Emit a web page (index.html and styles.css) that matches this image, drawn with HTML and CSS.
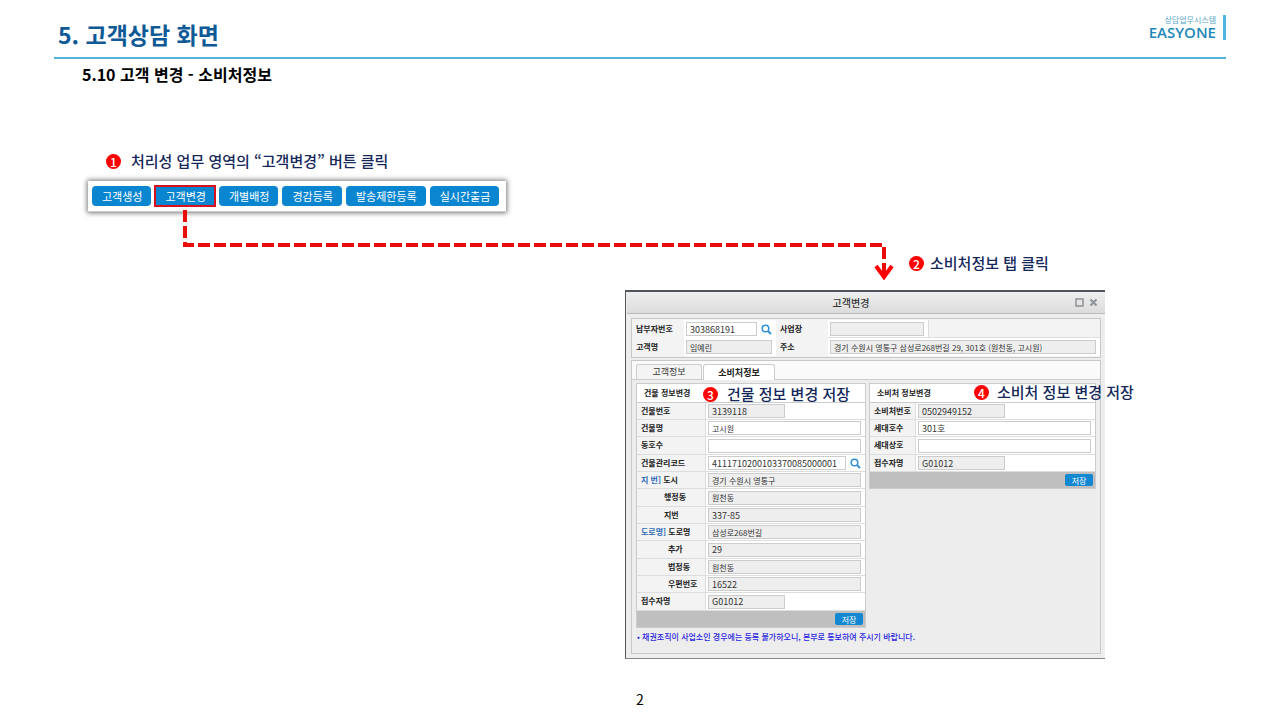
FILE: index.html
```html
<!DOCTYPE html>
<html lang="ko">
<head>
<meta charset="utf-8">
<meta name="viewport" content="width=device-width, initial-scale=1">
<title>고객 변경 - 소비처정보</title>
<link rel="stylesheet" href="styles.css">
</head>
<body>
<div class="slide">
  <header class="slide-head">
    <h1>5. 고객상담 화면</h1>
    <div class="brand"><span class="brand-sub">상담업무시스템</span><span class="brand-name">EASYONE</span></div>
  </header>
  <main class="stage">
    <h2>5.10 고객 변경 - 소비처정보</h2>

    <p class="step"><span class="badge">1</span>처리성 업무 영역의 “고객변경” 버튼 클릭</p>
    <div class="toolbar">
      <button type="button">고객생성</button>
      <button type="button" class="marked">고객변경</button>
      <button type="button">개별배정</button>
      <button type="button">경감등록</button>
      <button type="button">발송제한등록</button>
      <button type="button">실시간출금</button>
    </div>

    <svg class="arrow" width="720" height="80" viewBox="0 0 720 80" fill="none" stroke="#ea0b0b" stroke-width="4" aria-hidden="true">
      <path d="M11 10V45H710V76" stroke-dasharray="12 4"/>
      <path d="M702 66L710 77L718 66" stroke="#f00" stroke-linejoin="miter"/>
    </svg>

    <p class="step step-two"><span class="badge">2</span>소비처정보 탭 클릭</p>

    <section class="popup">
      <div class="popup-title">
        <h3>고객변경</h3>
        <button type="button" class="win-btn" aria-label="최대화"><svg width="9" height="9" viewBox="0 0 9 9" fill="none" stroke="#8d9398" stroke-width="1.5"><rect x="1" y="1" width="7" height="7"/></svg></button>
        <button type="button" class="win-btn" aria-label="닫기"><svg width="9" height="9" viewBox="0 0 9 9" fill="none" stroke="#8d9398" stroke-width="2"><path d="M1.500 1.500L7.500 7.500M7.500 1.500L1.500 7.500"/></svg></button>
      </div>

      <div class="summary">
        <label for="payer">납부자번호</label>
        <div class="cell find"><input id="payer" class="num" value="303868191"><button type="button" class="search" aria-label="납부자번호 검색"><svg width="11" height="11" viewBox="0 0 11 11" fill="none" stroke="#3190d6"><circle cx="4.500" cy="4.500" r="3.300" stroke-width="1.500"/><path d="M7 7L10 10" stroke-width="2"/></svg></button></div>
        <label for="site">사업장</label>
        <div class="site"><div class="cell"><input id="site" readonly></div></div>
        <label for="cust">고객명</label>
        <div class="cell"><input id="cust" value="임예린" readonly></div>
        <label for="addr">주소</label>
        <div class="cell"><input id="addr" value="경기 수원시 영통구 삼성로268번길 29, 301호 (원천동, 고시원)" readonly></div>
      </div>

      <div class="tabbox">
        <div class="tabs" role="tablist">
          <button type="button" role="tab" aria-selected="false">고객정보</button>
          <button type="button" role="tab" aria-selected="true">소비처정보</button>
        </div>
        <div class="panels">
          <form class="panel building">
            <h4>건물 정보변경</h4>
            <div class="row"><label for="b1">건물번호</label><div class="cell"><input id="b1" class="num short" value="3139118" readonly></div></div>
            <div class="row"><label for="b2">건물명</label><div class="cell"><input id="b2" value="고시원"></div></div>
            <div class="row"><label for="b3">동호수</label><div class="cell"><input id="b3"></div></div>
            <div class="row"><label for="b4">건물관리코드</label><div class="cell find"><input id="b4" class="num" value="4111710200103370085000001"><button type="button" class="search" aria-label="건물관리코드 검색"><svg width="11" height="11" viewBox="0 0 11 11" fill="none" stroke="#3190d6"><circle cx="4.500" cy="4.500" r="3.300" stroke-width="1.500"/><path d="M7 7L10 10" stroke-width="2"/></svg></button></div></div>
            <div class="row"><label for="b5"><span class="group">지 번]</span> 도시</label><div class="cell"><input id="b5" value="경기 수원시 영통구" readonly></div></div>
            <div class="row sub"><label for="b6">행정동</label><div class="cell"><input id="b6" value="원천동" readonly></div></div>
            <div class="row sub"><label for="b7">지번</label><div class="cell"><input id="b7" class="num" value="337-85" readonly></div></div>
            <div class="row"><label for="b8"><span class="group">도로명]</span> 도로명</label><div class="cell"><input id="b8" value="삼성로268번길" readonly></div></div>
            <div class="row sub deep"><label for="b9">추가</label><div class="cell"><input id="b9" class="num" value="29" readonly></div></div>
            <div class="row sub deep"><label for="b10">법정동</label><div class="cell"><input id="b10" value="원천동" readonly></div></div>
            <div class="row sub deep"><label for="b11">우편번호</label><div class="cell"><input id="b11" class="num" value="16522" readonly></div></div>
            <div class="row"><label for="b12">접수자명</label><div class="cell"><input id="b12" class="num short" value="G01012" readonly></div></div>
            <div class="actions"><button type="button">저장</button></div>
            <p class="step callout"><span class="badge">3</span>건물 정보 변경 저장</p>
          </form>
          <form class="panel consumer">
            <h4>소비처 정보변경</h4>
            <div class="row"><label for="c1">소비처번호</label><div class="cell"><input id="c1" class="num short" value="0502949152" readonly></div></div>
            <div class="row"><label for="c2">세대호수</label><div class="cell"><input id="c2" class="num" value="301호"></div></div>
            <div class="row"><label for="c3">세대상호</label><div class="cell"><input id="c3"></div></div>
            <div class="row"><label for="c4">접수자명</label><div class="cell"><input id="c4" class="num short" value="G01012" readonly></div></div>
            <div class="actions"><button type="button">저장</button></div>
            <p class="step callout"><span class="badge">4</span>소비처 정보 변경 저장</p>
          </form>
        </div>
        <p class="note">• 채권조직이 사업소인 경우에는 등록 불가하오니, 본부로 통보하여 주시기 바랍니다.</p>
      </div>
    </section>
  </main>
  <footer>2</footer>
</div>
</body>
</html>
```
FILE: styles.css
```css
* { box-sizing: border-box; }
body {
  margin: 0;
  background: #fff;
  color: #111;
  font-family: "Noto Sans CJK KR", sans-serif;
}
h1, h2, h3, h4, p { margin: 0; }
button, input { font-family: inherit; margin: 0; padding: 0; }

.slide { min-height: 100vh; display: flex; flex-direction: column; }
.slide-head {
  height: 59px;
  margin: 0 54px;
  padding: 15px 0 0 4px;
  border-bottom: 2px solid #56b4dc;
  display: flex;
  justify-content: space-between;
  align-items: flex-start;
}
h1 { font-size: 23px; font-weight: 700; line-height: 38px; color: #0f5a96; }
.brand {
  height: 25px;
  padding-right: 7px;
  border-right: 3px solid #4db5df;
  display: flex;
  flex-direction: column;
  align-items: flex-end;
}
.brand-sub { font-size: 8px; line-height: 10px; color: #55a5c5; }
.brand-name { font-family: "Open Sans", sans-serif; font-size: 15px; font-weight: 600; line-height: 15px; color: #1d87b8; }

.stage { position: relative; flex: 1; }
h2 { margin-left: 82px; padding-top: 3px; font-size: 16px; line-height: 25px; color: #000; }

.step {
  display: flex;
  align-items: center;
  font-size: 15px;
  font-weight: 500;
  line-height: 20px;
  color: #14285a;
  white-space: nowrap;
}
.badge {
  width: 15px;
  height: 15px;
  border-radius: 50%;
  background: #f00;
  color: #fff;
  font-size: 12px;
  font-weight: 500;
  line-height: 15px;
  text-align: center;
}
.stage > .step { margin: 64px 0 0 106px; gap: 10px; }
.stage > .step-two { margin: 41px 0 0 909px; gap: 6px; }

.toolbar {
  width: fit-content;
  margin: 10px 0 0 88px;
  padding: 5px 7px 5px 4px;
  display: flex;
  gap: 4px;
  background: #fff;
  border-bottom: 1px solid #ccc;
  box-shadow: 0 0 5px 1px #777;
}
.toolbar button {
  height: 20px;
  padding: 0 9px 0 10px;
  border: 0;
  border-radius: 4px;
  background: #0a86d0;
  color: #fff;
  font-size: 11px;
  line-height: 18px;
}
.toolbar .marked { outline: 2px solid #d8121c; outline-offset: -1px; border-radius: 0; }

.arrow { position: absolute; left: 174px; top: 141px; }

.popup {
  margin: 17px 175px 0 625px;
  padding: 0 0 4px 1px;
  background: #ededed;
  border: solid #50565c;
  border-width: 2px 0 1px 1px;
  border-bottom-color: #888;
  font-size: 8px;
}
.popup-title {
  height: 22px;
  padding-right: 7px;
  display: flex;
  align-items: center;
  gap: 5px;
  background: linear-gradient(#eee, #dcdcdc);
  border-bottom: 1px solid #bbb;
}
.popup-title h3 { flex: 1; padding-left: 5px; text-align: center; font-size: 10px; font-weight: 500; line-height: 18px; color: #333; }
.win-btn { width: 9px; height: 9px; border: 0; background: none; display: flex; }

.popup label { display: block; font-weight: 700; line-height: 16px; color: #222; white-space: nowrap; }
.cell { min-width: 0; padding: 1px 4px 1px 2px; display: flex; align-items: center; background: #fff; }
.cell input {
  flex: 1;
  min-width: 0;
  height: 14px;
  padding: 0 3px;
  border: 1px solid #ccc;
  border-radius: 0;
  background: #fff;
  color: #333;
  font-size: 8px;
  line-height: 12px;
}
.cell .num { font-size: 9px; }
.cell input:read-only { background: #eee; }
.find { gap: 4px; }
.search { width: 11px; height: 11px; border: 0; background: none; display: flex; }

.summary {
  margin: 4px 4px 0;
  padding: 1px 0;
  display: grid;
  grid-template-columns: 52px 92px 52px 1fr;
  grid-template-rows: 18px 18px;
  border: 1px solid #c8c8c8;
  background: #f3f3f3;
}
.summary label { padding-left: 4px; line-height: 17px; }
.site { display: flex; border-bottom: 1px solid #ddd; }
.site .cell { width: 101px; border-right: 1px solid #ddd; }

.tabbox { margin: 2px 4px 0; padding-bottom: 10px; border: 1px solid #c8c8c8; }
.tabs {
  height: 19px;
  padding: 3px 4px 0;
  display: flex;
  align-items: stretch;
  gap: 1px;
  background: #fafafa;
  border-bottom: 1px solid #ccc;
}
.tabs button {
  min-width: 66px;
  border: 1px solid #ccc;
  border-bottom: 0;
  border-radius: 3px 3px 0 0;
  background: #f4f4f4;
  font-size: 9px;
  line-height: 12px;
  color: #333;
}
.tabs button[aria-selected="true"] { min-width: 72px; margin-bottom: -1px; background: #fff; font-weight: 700; color: #222; }

.panels { padding: 3px 4px 0; display: grid; grid-template-columns: 230fr 227fr; column-gap: 3px; align-items: start; }
.panel { position: relative; border: 1px solid #ccc; background: #f3f3f3; }
.panel h4 { height: 19px; padding-left: 7px; background: #fff; border-bottom: 1px solid #ccc; font-size: 8px; line-height: 18px; color: #222; }
.row { height: 17px; display: grid; grid-template-columns: 69px 1fr; border-bottom: 1px solid #ddd; }
.row:nth-of-type(3n) { height: 18px; }
.row label { padding-left: 4px; border-right: 1px solid #ddd; }
.row .cell { padding-left: 2px; }
.sub label { padding-left: 27px; }
.deep label { padding-left: 31px; }
.row .short { flex: 0 0 77px; }
.group { color: #2f6cb5; }
.consumer .row { grid-template-columns: 46px 1fr; }
.consumer .short { flex-basis: 87px; }
.actions { height: 16px; padding: 2px; display: flex; justify-content: flex-end; background: #bfbfbf; }
.actions button { width: 28px; height: 12px; border: 0; border-radius: 2px; background: #1487d2; color: #fff; font-size: 8px; line-height: 11px; }
.callout { position: absolute; top: 0; left: 66px; gap: 9px; }
.consumer .callout { left: 104px; top: -2px; gap: 8px; }

.note { padding: 3px 0 0 5px; line-height: 12px; font-weight: 500; color: #2a1ee0; }

footer { padding-bottom: 10px; text-align: center; font-size: 14px; line-height: 22px; color: #000; }
```
